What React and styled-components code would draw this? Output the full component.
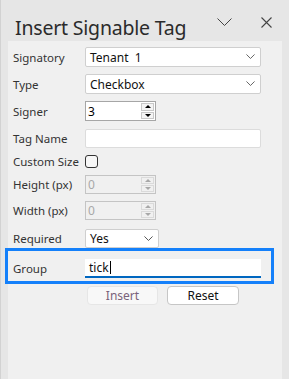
import React from "react";
import styled, { createGlobalStyle } from "styled-components";

const GlobalStyle = createGlobalStyle`
  html, body {
    margin: 0;
    padding: 0;
    background: #e6e6e6;
  }
  body {
    font-family: "Noto Sans", "Open Sans", sans-serif;
  }
`;

const Pane = styled.div`
  width: 289px;
  height: 379px;
  box-sizing: border-box;
  border-left: 1px solid #d2d2d2;
  background: #e6e6e6;
  display: flex;
  flex-direction: column;
  overflow: hidden;
`;

const Header = styled.div`
  height: 41px;
  display: flex;
  align-items: center;
  padding: 0 0 0 14px;
  box-sizing: border-box;
`;

const Title = styled.h1`
  margin: 0;
  font-size: 19.5px;
  font-weight: 400;
  color: #2b2b2b;
  flex: 1;
  padding-top: 14px;
  letter-spacing: -0.2px;
`;

const HeaderIcon = styled.button`
  border: 0;
  background: transparent;
  padding: 0;
  width: ${(p) => p.w}px;
  height: 20px;
  margin-right: ${(p) => p.mr}px;
  margin-top: 4px;
  display: flex;
  align-items: center;
  justify-content: center;
  color: #444;
`;

const Panel = styled.div`
  margin: 0 7px 0 7px;
  flex: 1;
  background: #f0f0f0;
  padding: 6px 0 0 5px;
  display: flex;
  flex-direction: column;
`;

const Row = styled.div`
  display: grid;
  grid-template-columns: 72px 1fr;
  align-items: center;
  height: ${(p) => p.h}px;
  margin-bottom: ${(p) => p.mb}px;
`;

const Label = styled.span`
  font-size: 11.5px;
  color: #333;
  white-space: nowrap;
`;

const SelectBox = styled.div`
  width: ${(p) => p.w}px;
  height: 100%;
  box-sizing: border-box;
  background: #fff;
  border: 1px solid #cfcfcf;
  border-radius: 2px;
  display: flex;
  align-items: center;
  justify-content: space-between;
  padding: 0 5px 0 4px;
  font-size: 12px;
  color: #111;
`;

const TextBox = styled.div`
  width: 176px;
  height: 100%;
  box-sizing: border-box;
  background: #fff;
  border: 1px solid #dcdcdc;
  border-radius: 2px;
  ${(p) => p.focused && "border: 0; border-bottom: 2px solid #0067c0; border-radius: 0;"}
  display: flex;
  align-items: center;
  padding: 0 4px;
  font-size: 12px;
  color: #111;
`;

const Caret = styled.span`
  display: inline-block;
  width: 1px;
  height: 13px;
  background: #000;
  margin-left: 1px;
`;

const SpinBox = styled.div`
  width: 71px;
  height: 100%;
  box-sizing: border-box;
  background: ${(p) => (p.disabled ? "#f0f0f0" : "#fff")};
  border: 1px solid ${(p) => (p.disabled ? "#c4c4c4" : "#a6a6a6")};
  display: flex;
  align-items: center;
  justify-content: space-between;
  padding: 0 1px 0 2px;
  font-size: 12px;
  color: ${(p) => (p.disabled ? "#a8a8a8" : "#000")};
`;

const SpinButtons = styled.div`
  display: flex;
  flex-direction: column;
  width: 13px;
  height: calc(100% - 2px);
  gap: 1px;
`;

const SpinButton = styled.div`
  flex: 1;
  background: ${(p) => (p.disabled ? "#f0f0f0" : "#f4f4f4")};
  border: 1px solid ${(p) => (p.disabled ? "#dadada" : "#c8c8c8")};
  display: flex;
  align-items: center;
  justify-content: center;
  &::after {
    content: "";
    border-left: 3px solid transparent;
    border-right: 3px solid transparent;
    ${(p) => (p.down ? "border-top" : "border-bottom")}: 3px solid
      ${(p) => (p.disabled ? "#a8a8a8" : "#000")};
  }
`;

const Checkbox = styled.div`
  width: 13px;
  height: 13px;
  box-sizing: border-box;
  border: 1px solid #333;
  border-radius: 3px;
  background: #f7f7f7;
`;

const Highlight = styled.div`
  margin: 2px 0 0 -8px;
  width: 269px;
  box-sizing: border-box;
  border: 3px solid #1480fa;
  padding: 8px 0 4px 5px;
`;

const ButtonRow = styled.div`
  display: flex;
  gap: 9px;
  margin: 2px 0 0 74px;
`;

const Button = styled.button`
  width: ${(p) => p.w}px;
  height: 19px;
  box-sizing: border-box;
  border-radius: 4px;
  font-family: inherit;
  font-size: 12px;
  padding: 0;
  line-height: 1;
  background: ${(p) => (p.primary ? "#f8f8f8" : "#fff")};
  border: 1px solid ${(p) => (p.primary ? "#e6e6e6" : "#c6c6c6")};
  color: ${(p) => (p.primary ? "#7a637a" : "#111")};
`;

const Chevron = ({ size = 9, color = "#555" }) => (
  <svg width={size} height={size * 0.6} viewBox="0 0 10 6" fill="none">
    <path d="M0.5 0.5 L5 5 L9.5 0.5" stroke={color} strokeWidth="1" />
  </svg>
);

const Spin = ({ value, disabled }) => (
  <SpinBox disabled={disabled}>
    <span>{value}</span>
    <SpinButtons>
      <SpinButton disabled={disabled} />
      <SpinButton disabled={disabled} down />
    </SpinButtons>
  </SpinBox>
);

const App = () => {
  return (
    <Pane>
      <GlobalStyle />
      <Header>
        <Title>Insert Signable Tag</Title>
        <HeaderIcon w={18} mr={26}>
          <svg width="15" height="9" viewBox="0 0 15 9" fill="none">
            <path d="M0.5 0.5 L7.5 7.5 L14.5 0.5" stroke="#444" strokeWidth="1" />
          </svg>
        </HeaderIcon>
        <HeaderIcon w={14} mr={16}>
          <svg width="11" height="11" viewBox="0 0 11 11" fill="none">
            <path d="M0.5 0.5 L10.5 10.5 M10.5 0.5 L0.5 10.5" stroke="#444" strokeWidth="1.1" />
          </svg>
        </HeaderIcon>
      </Header>
      <Panel>
        <Row h={20} mb={7}>
          <Label>Signatory</Label>
          <SelectBox w={176}>
            <span>Tenant&nbsp;&nbsp;1</span>
            <Chevron />
          </SelectBox>
        </Row>
        <Row h={20} mb={7}>
          <Label>Type</Label>
          <SelectBox w={176}>
            <span>Checkbox</span>
            <Chevron />
          </SelectBox>
        </Row>
        <Row h={20} mb={8}>
          <Label>Signer</Label>
          <Spin value="3" />
        </Row>
        <Row h={19} mb={5}>
          <Label>Tag Name</Label>
          <TextBox />
        </Row>
        <Row h={17} mb={5}>
          <Label>Custom Size</Label>
          <Checkbox />
        </Row>
        <Row h={19} mb={7}>
          <Label>Height (px)</Label>
          <Spin value="0" disabled />
        </Row>
        <Row h={19} mb={9}>
          <Label>Width (px)</Label>
          <Spin value="0" disabled />
        </Row>
        <Row h={17} mb={0}>
          <Label>Required</Label>
          <SelectBox w={74}>
            <span>Yes</span>
            <Chevron color="#444" />
          </SelectBox>
        </Row>
        <Highlight>
          <Row h={18} mb={0}>
            <Label>Group</Label>
            <TextBox focused>
              <span>tick</span>
              <Caret />
            </TextBox>
          </Row>
        </Highlight>
        <ButtonRow>
          <Button w={71} primary>
            Insert
          </Button>
          <Button w={72}>Reset</Button>
        </ButtonRow>
      </Panel>
    </Pane>
  );
};

export default App;
